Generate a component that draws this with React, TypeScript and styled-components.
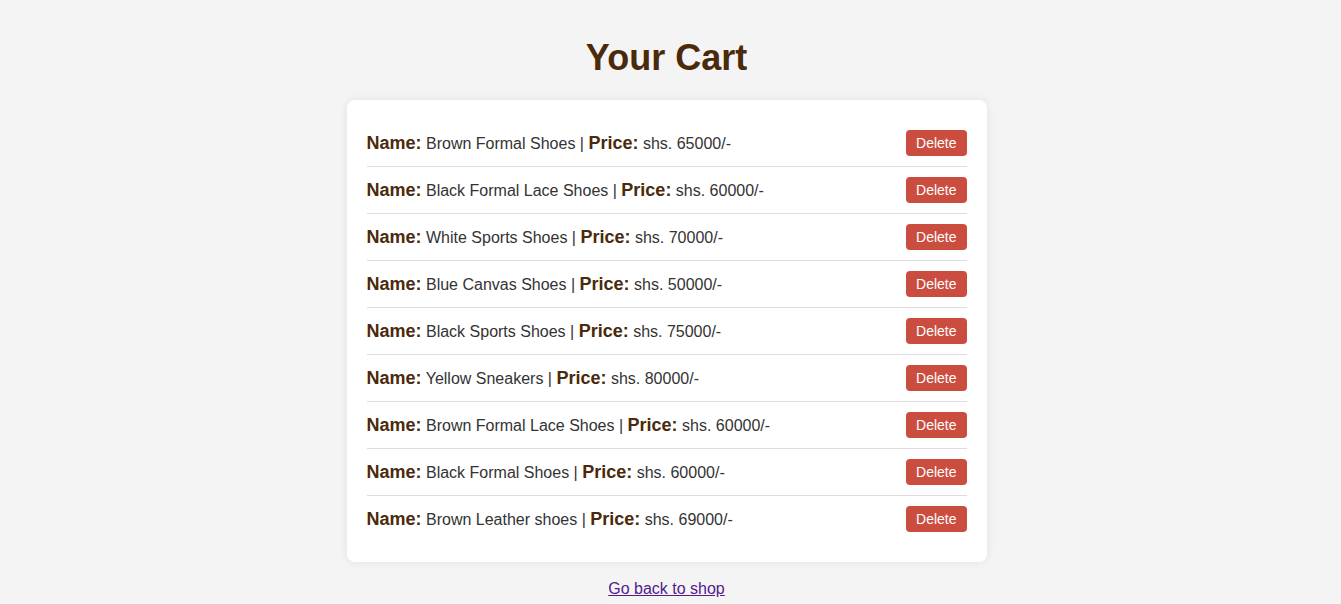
import React from "react";
import styled, { createGlobalStyle } from "styled-components";

const GlobalStyle = createGlobalStyle`
  html, body {
    margin: 0;
    padding: 0;
    background: #f4f4f4;
    font-family: "Liberation Sans", Arial, sans-serif;
  }
`;

const Page = styled.div`
  display: flex;
  flex-direction: column;
  align-items: center;
  padding: 37px 8px 0 0;
`;

const Title = styled.h1`
  margin: 0 0 21px;
  font-size: 36px;
  font-weight: 700;
  color: #4a2a0b;
`;

const Card = styled.div`
  width: 640px;
  box-sizing: border-box;
  background: #ffffff;
  border-radius: 8px;
  box-shadow: 0 0 10px rgba(0, 0, 0, 0.08);
  padding: 20px;
`;

const Row = styled.div`
  display: flex;
  align-items: center;
  justify-content: space-between;
  padding: 10px 0;
  border-bottom: 1px solid #dddddd;
  &:last-child {
    border-bottom: none;
  }
`;

const Info = styled.span`
  font-size: 16px;
  color: #333333;
`;

const Label = styled.strong`
  font-size: 18px;
  color: #4a2a0b;
`;

const DeleteButton = styled.button`
  font-family: "Liberation Sans", Arial, sans-serif;
  font-size: 14px;
  line-height: 16px;
  color: #ffffff;
  background: #cb4d3f;
  border: none;
  border-radius: 4px;
  padding: 5px 10px;
  cursor: pointer;
`;

const BackLink = styled.a`
  margin-top: 18px;
  font-size: 16px;
  color: #551a8b;
  text-decoration: underline;
`;

const items = [
  { name: "Brown Formal Shoes", price: "65000" },
  { name: "Black Formal Lace Shoes", price: "60000" },
  { name: "White Sports Shoes", price: "70000" },
  { name: "Blue Canvas Shoes", price: "50000" },
  { name: "Black Sports Shoes", price: "75000" },
  { name: "Yellow Sneakers", price: "80000" },
  { name: "Brown Formal Lace Shoes", price: "60000" },
  { name: "Black Formal Shoes", price: "60000" },
  { name: "Brown Leather shoes", price: "69000" },
];

export default function App() {
  return (
    <>
      <GlobalStyle />
      <Page>
        <Title>Your Cart</Title>
        <Card>
          {items.map((item, i) => (
            <Row key={i}>
              <Info>
                <Label>Name:</Label> {item.name} | <Label>Price:</Label> shs. {item.price}/-
              </Info>
              <DeleteButton>Delete</DeleteButton>
            </Row>
          ))}
        </Card>
        <BackLink href="#">Go back to shop</BackLink>
      </Page>
    </>
  );
}
